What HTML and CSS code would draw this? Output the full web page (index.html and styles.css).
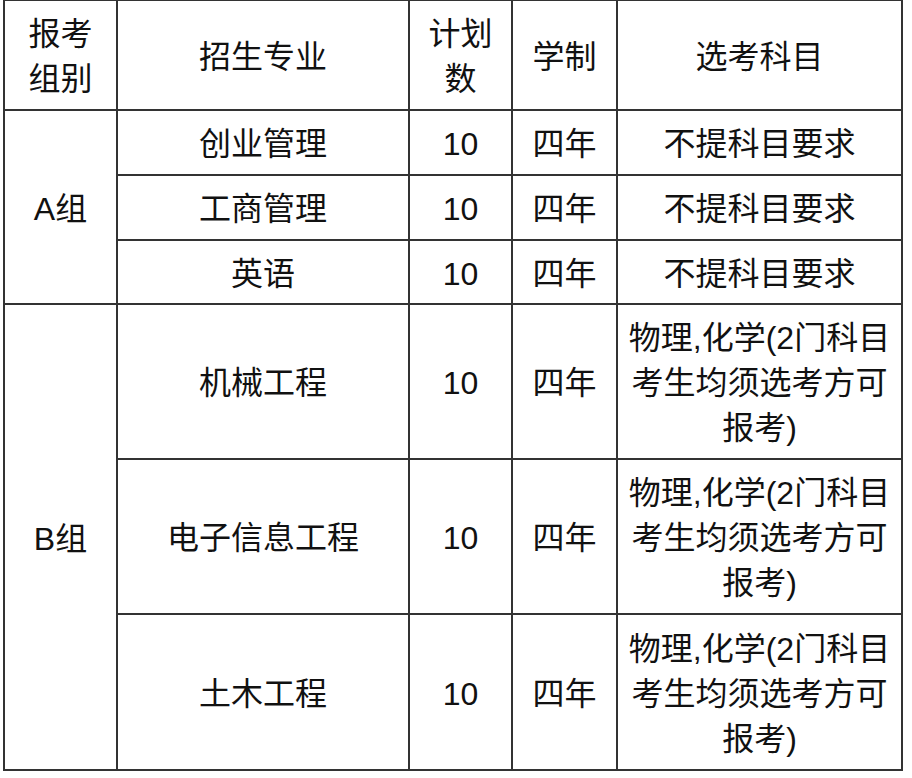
FILE: index.html
```html
<!DOCTYPE html>
<html lang="zh-CN">
<head>
<meta charset="utf-8">
<title>招生计划</title>
<link rel="stylesheet" href="styles.css">
</head>
<body>
<table class="plan">
  <tr class="r-head">
    <td class="c1">报考<br>组别</td>
    <td class="c2">招生专业</td>
    <td class="c3">计划<br>数</td>
    <td class="c4">学制</td>
    <td class="c5">选考科目</td>
  </tr>
  <tr class="r-a1">
    <td rowspan="3">A组</td>
    <td>创业管理</td>
    <td>10</td>
    <td>四年</td>
    <td>不提科目要求</td>
  </tr>
  <tr class="r-a2">
    <td>工商管理</td>
    <td>10</td>
    <td>四年</td>
    <td>不提科目要求</td>
  </tr>
  <tr class="r-a3">
    <td>英语</td>
    <td>10</td>
    <td>四年</td>
    <td>不提科目要求</td>
  </tr>
  <tr class="r-b1">
    <td rowspan="3">B组</td>
    <td>机械工程</td>
    <td>10</td>
    <td>四年</td>
    <td>物理,化学(2门科目<br>考生均须选考方可<br>报考)</td>
  </tr>
  <tr class="r-b2">
    <td>电子信息工程</td>
    <td>10</td>
    <td>四年</td>
    <td>物理,化学(2门科目<br>考生均须选考方可<br>报考)</td>
  </tr>
  <tr class="r-b3">
    <td>土木工程</td>
    <td>10</td>
    <td>四年</td>
    <td>物理,化学(2门科目<br>考生均须选考方可<br>报考)</td>
  </tr>
</table>
</body>
</html>
```

FILE: styles.css
```css
html, body {
  margin: 0;
  padding: 0;
  background: #ffffff;
}

.plan {
  margin: -1px 0 0 3px;
  width: 900px;
  table-layout: fixed;
  border-collapse: separate;
  border-spacing: 0;
  border-top: 2px solid #333333;
  border-left: 2px solid #333333;
  font-family: "Liberation Sans", "Noto Sans CJK SC", sans-serif;
  font-size: 32px;
  line-height: 45px;
  color: #111111;
}

.plan td {
  box-sizing: border-box;
  border-right: 2px solid #333333;
  border-bottom: 2px solid #333333;
  padding: 4px 4px 0;
  text-align: center;
  vertical-align: middle;
  white-space: nowrap;
}

.c1 { width: 113px; }
.c2 { width: 292px; }
.c3 { width: 103px; }
.c4 { width: 105px; }
.c5 { width: 285px; }

.r-head { height: 110px; }
.r-a1 { height: 65px; }
.r-a2 { height: 65px; }
.r-a3 { height: 64px; }
.r-b1 { height: 155px; }
.r-b2 { height: 155px; }
.r-b3 { height: 156px; }
```
